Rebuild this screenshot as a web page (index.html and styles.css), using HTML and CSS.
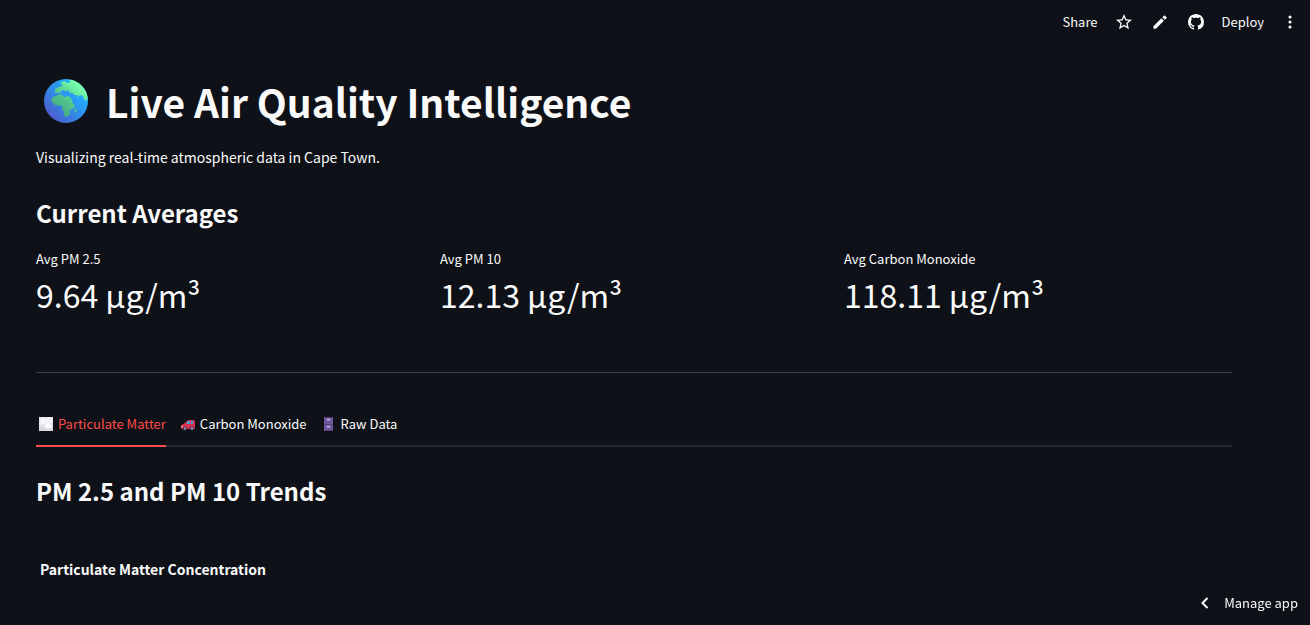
FILE: index.html
```html
<!DOCTYPE html>
<html lang="en">
<head>
    <meta charset="UTF-8">
    <meta name="viewport" content="width=device-width, initial-scale=1.0">
    <title>Live Air Quality Intelligence</title>
    <link rel="stylesheet" href="styles.css">
</head>
<body>

<header class="toolbar">
    <button class="toolbar-button">Share</button>
    <div class="toolbar-icons">
        <button class="toolbar-button" aria-label="Favorite">
            <svg class="icon" viewBox="2 2 20 20"><path d="M22 9.24l-7.19-.62L12 2 9.19 8.63 2 9.24l5.46 4.73L5.82 21 12 17.27 18.18 21l-1.63-7.03L22 9.24zM12 15.4l-3.76 2.27 1-4.28-3.32-2.88 4.38-.38L12 6.1l1.71 4.04 4.38.38-3.32 2.88 1 4.28L12 15.4z"/></svg>
        </button>
        <button class="toolbar-button" aria-label="Edit">
            <svg class="icon" viewBox="3 3 18 18"><path d="M3.500 17.300V20.500h3.200L16.900 10.300l-3.200-3.200L3.500 17.300zM20.200 7c.4-.4.4-1 0-1.400l-1.800-1.800c-.4-.4-1-.4-1.400 0l-2.100 2.100 3.200 3.200L20.200 7z" transform="translate(1.500 1.500) scale(0.880)"/></svg>
        </button>
        <button class="toolbar-button" aria-label="View source on GitHub">
            <svg class="icon" viewBox="0 0 16 16"><path d="M8 0C3.58 0 0 3.58 0 8c0 3.54 2.290 6.530 5.470 7.590.4.070.55-.17.55-.38 0-.19-.01-.82-.01-1.490-2.010.370-2.530-.490-2.690-.940-.090-.230-.480-.940-.820-1.130-.280-.150-.680-.520-.010-.530.630-.010 1.080.580 1.230.820.720 1.210 1.870.870 2.330.660.070-.520.280-.870.510-1.070-1.780-.2-3.640-.890-3.640-3.950 0-.870.310-1.590.820-2.150-.080-.2-.360-1.020.080-2.120 0 0 .670-.210 2.200.820.640-.180 1.320-.270 2-.270s1.360.090 2 .270c1.530-1.040 2.200-.820 2.200-.820.440 1.100.160 1.920.080 2.120.510.560.820 1.270.820 2.150 0 3.070-1.870 3.750-3.650 3.950.290.250.540.730.540 1.480 0 1.070-.010 1.930-.010 2.200 0 .210.150.460.550.380A8.010 8.010 0 0 0 16 8c0-4.420-3.580-8-8-8z"/></svg>
        </button>
    </div>
    <button class="toolbar-button">Deploy</button>
    <button class="toolbar-button" aria-label="Main menu">
        <svg class="icon" viewBox="0 0 24 24"><circle cx="12" cy="4.500" r="2.300"/><circle cx="12" cy="12" r="2.300"/><circle cx="12" cy="19.500" r="2.300"/></svg>
    </button>
</header>

<main class="content">
    <h1 class="title">
        <svg class="globe" viewBox="0 0 44 44" aria-hidden="true">
            <defs>
                <linearGradient id="sea" x1="0.1" y1="0.9" x2="0.8" y2="0.2">
                    <stop offset="0" stop-color="#5157c8"/>
                    <stop offset="0.5" stop-color="#3188e8"/>
                    <stop offset="1" stop-color="#22b5ff"/>
                </linearGradient>
                <linearGradient id="land" gradientUnits="userSpaceOnUse" x1="10" y1="36" x2="34" y2="6">
                    <stop offset="0" stop-color="#3fa080"/>
                    <stop offset="0.5" stop-color="#52c48c"/>
                    <stop offset="1" stop-color="#78ffac"/>
                </linearGradient>
                <clipPath id="disc"><circle cx="22" cy="22" r="22"/></clipPath>
            </defs>
            <circle cx="22" cy="22" r="22" fill="url(#sea)"/>
            <g clip-path="url(#disc)" fill="url(#land)">
                <path d="M17 3L21 2 23 4 27 3 25 1 29 0C38 3 43 10 44 19L42 22 40 20 39 17 36 16 34 18 33 16 30 16 29 14 26 14 25 12 23 11 22 13 20 11 17 12 16 14 11 14 11 10 15 8 19 7 17 5Z"/>
                <path d="M11 17L17 15 20 18 25 17 28 21 29 25 31 26 30 29 26 31 26 35 23 38 20 37 20 33 18 30 18 27 11 26 7 22 8 19Z"/>
                <path d="M32 29L33 31 31 34 30 33Z"/>
            </g>
        </svg>
        <span>Live Air Quality Intelligence</span>
    </h1>
    <p class="intro">Visualizing real-time atmospheric data in Cape Town.</p>

    <h2 class="heading">Current Averages</h2>
    <div class="metrics">
        <div class="metric">
            <div class="metric-label">Avg PM 2.5</div>
            <div class="metric-value">9.64 µg/m³</div>
        </div>
        <div class="metric">
            <div class="metric-label">Avg PM 10</div>
            <div class="metric-value">12.13 µg/m³</div>
        </div>
        <div class="metric">
            <div class="metric-label">Avg Carbon Monoxide</div>
            <div class="metric-value">118.11 µg/m³</div>
        </div>
    </div>

    <hr class="divider">

    <div class="tabs" role="tablist">
        <button class="tab active" role="tab" aria-selected="true">
            <svg class="emoji" viewBox="0 0 20 16" aria-hidden="true">
                <rect x="3" y="1" width="14" height="14" fill="#e9e7ee"/>
                <circle cx="7" cy="5" r="3" fill="#f8f7fa"/>
                <circle cx="13" cy="4" r="3" fill="#f4f2f7"/>
                <circle cx="12" cy="10" r="3" fill="#faf9fc"/>
                <path d="M3 11q3-2 5 0t4 2 5-2v4H3z" fill="#dcd8e3"/>
            </svg>
            Particulate Matter
        </button>
        <button class="tab" role="tab" aria-selected="false">
            <svg class="emoji" viewBox="0 0 20 16" aria-hidden="true">
                <path d="M3 10q0-1 2-2l2-1 2-2q1-1 2-1h4q2 0 2 2v6q0 1-1 1H4q-1 0-1-1z" fill="#d8304f"/>
                <path d="M8 8l2-3h2v3zM13 5h2v3h-2z" fill="#4b9bdd"/>
                <path d="M3 10h2v1H3z" fill="#ffce7c"/>
                <circle cx="7" cy="12.500" r="2" fill="#493d67"/>
                <circle cx="14" cy="12.500" r="2" fill="#493d67"/>
                <circle cx="7" cy="12.500" r="1" fill="#a9a4bd"/>
                <circle cx="14" cy="12.500" r="1" fill="#a9a4bd"/>
            </svg>
            Carbon Monoxide
        </button>
        <button class="tab" role="tab" aria-selected="false">
            <svg class="emoji" viewBox="0 0 20 16" aria-hidden="true">
                <rect x="5" y="1" width="9" height="14" fill="#56407f"/>
                <rect x="5" y="2" width="9" height="6" fill="#70569f"/>
                <rect x="5" y="9" width="9" height="5" fill="#70569f"/>
                <path d="M8 3h3v1H8zM8 10h3v1H8z" fill="#d9cdee"/>
                <path d="M8 4h3v1H8zM8 11h3v1H8z" fill="#8b76b5"/>
            </svg>
            Raw Data
        </button>
    </div>

    <section role="tabpanel">
        <h2 class="heading">PM 2.5 and PM 10 Trends</h2>
        <h3 class="chart-title">Particulate Matter Concentration</h3>
    </section>
</main>

<button class="manage-app">
    <svg class="chevron" viewBox="0 0 16 16" aria-hidden="true"><path d="M10.500 3L5.500 8l5 5"/></svg>
    Manage app
</button>

</body>
</html>
```
FILE: styles.css
```css
/* General Styles */
* {
    box-sizing: border-box;
}
body {
    margin: 0;
    min-height: 100vh;
    background: #0e1117;
    color: #fafafa;
    font-family: 'Noto Sans CJK SC', 'Noto Sans', sans-serif;
    font-size: 14px;
    line-height: 24px;
}
button {
    background: none;
    border: none;
    padding: 0;
    color: inherit;
    font-family: inherit;
    font-size: 13px;
    line-height: 20px;
    cursor: pointer;
}
h1, h2, h3, p {
    margin: 0;
}

/* Top bar */
.toolbar {
    display: flex;
    justify-content: flex-end;
    align-items: center;
    gap: 18px;
    height: 44px;
    padding-right: 12px;
}
.toolbar-icons {
    display: flex;
    gap: 20px;
}
.toolbar-button {
    display: flex;
    align-items: center;
}
.icon {
    width: 16px;
    height: 16px;
    fill: currentColor;
}

.content {
    padding: 31px 78px 40px 36px;
}
.title {
    display: flex;
    align-items: center;
    gap: 18px;
    padding-left: 8px;
    font-size: 39px;
    line-height: 52px;
    font-weight: 700;
}
.globe {
    flex: none;
    width: 44px;
    height: 44px;
}
.intro {
    margin-top: 18px;
}
.heading {
    margin-top: 27px;
    font-size: 24px;
    line-height: 34px;
    font-weight: 600;
}

/* Metrics */
.metrics {
    display: grid;
    grid-template-columns: repeat(3, 1fr);
    gap: 16px;
    margin-top: 19px;
}
.metric-label {
    font-size: 13px;
    line-height: 20px;
}
.metric-value {
    margin-top: 3px;
    font-size: 32px;
    line-height: 44px;
}
.divider {
    height: 1px;
    margin: 56px 0 31px;
    border: none;
    background: #3d4044;
}

/* Tabs */
.tabs {
    display: flex;
    gap: 12px;
    border-bottom: 2px solid #262730;
}
.tab {
    display: flex;
    align-items: center;
    gap: 2px;
    height: 43px;
    margin-bottom: -2px;
    padding-bottom: 1px;
    border-bottom: 2px solid transparent;
}
.tab.active {
    color: #ff4b4b;
    border-bottom-color: #ff4b4b;
}
.emoji {
    width: 20px;
    height: 16px;
}
.chart-title {
    margin-top: 51px;
    padding-left: 4px;
    font-size: 14px;
    line-height: 20px;
    font-weight: 700;
}

/* Stays in the corner over the page */
.manage-app {
    position: fixed;
    right: 12px;
    bottom: 12px;
    display: flex;
    align-items: center;
    gap: 11px;
}
.chevron {
    width: 16px;
    height: 16px;
    fill: none;
    stroke: currentColor;
    stroke-width: 2;
}
```
